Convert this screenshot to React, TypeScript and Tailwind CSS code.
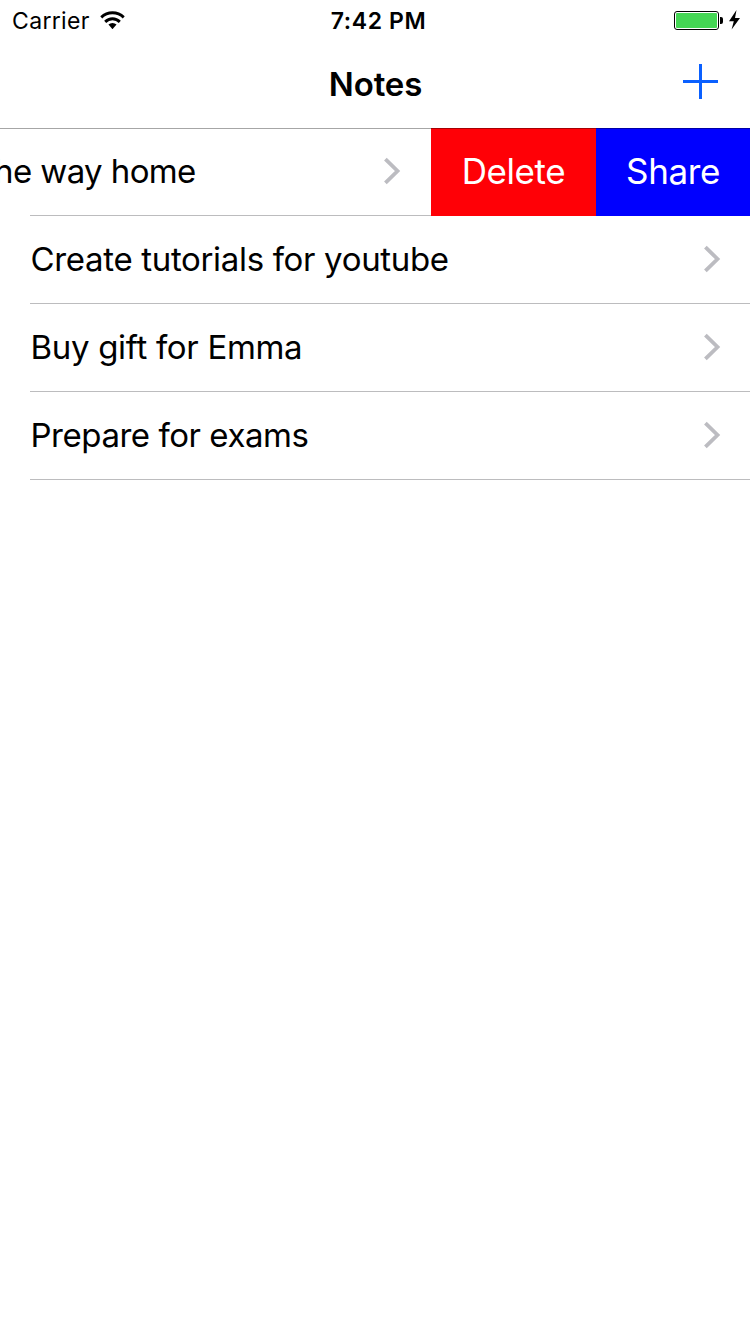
function Wifi() {
  return (
    <svg width="25" height="18" viewBox="0 0 26 18" preserveAspectRatio="none" fill="none" stroke="#000" strokeWidth="3">
      <path d="M1.3 6.4a17.2 17.2 0 0 1 23.4 0" />
      <path d="M5.4 10.9a10.9 10.9 0 0 1 15.2 0" />
      <path d="M13 18.2l-4.2-4.6a6.3 6.3 0 0 1 8.4 0z" fill="#000" stroke="none" />
    </svg>
  );
}

function Battery() {
  return (
    <svg width="67" height="20" viewBox="0 0 67 20">
      <rect x="0.5" y="1.5" width="44" height="18" rx="2.5" fill="#fff" stroke="#000" />
      <rect x="2" y="3" width="41" height="15" rx="1" fill="#44d654" />
      <path d="M46 7h1a2 2 0 0 1 2 2v3a2 2 0 0 1-2 2h-1z" />
      <path d="M62.5 0L55 11.2h4.8L57.6 19.5L66 8h-5z" />
    </svg>
  );
}

function Chevron() {
  return (
    <svg width="18" height="28" viewBox="0 0 18 28" fill="none" stroke="#bcbcc1" strokeWidth="3.8" className="mb-px shrink-0">
      <path d="M2.4 2.2L14.5 14L2.4 25.8" />
    </svg>
  );
}

const rows = [
  { title: "Create tutorials for youtube", spacing: "tracking-[-0.33px]" },
  { title: "Buy gift for Emma", spacing: "tracking-[-0.32px]" },
  { title: "Prepare for exams", spacing: "tracking-[-0.46px]" },
];

export default function App() {
  return (
    <main className="h-[1334px] w-[750px] overflow-hidden bg-white font-['Inter',sans-serif] text-black">
      <header className="h-32">
        <div className="grid h-10 grid-cols-[1fr_auto_1fr] items-center pl-3 pr-[9px]">
          <div className="flex items-center gap-[10px]">
            <span className="pt-[2px] text-[23px] leading-[38px] tracking-[0.34px]">Carrier</span>
            <Wifi />
          </div>
          <span className="pl-1 pt-[2px] text-[23px] font-semibold leading-[38px] tracking-[0.6px]">7:42 PM</span>
          <div className="flex justify-end">
            <Battery />
          </div>
        </div>
        <div className="grid h-[88px] grid-cols-[1fr_auto_1fr] items-center pr-8">
          <span />
          <h1 className="pl-[33px] text-[33px] font-semibold leading-[88px] tracking-[-0.1px]">Notes</h1>
          <button className="justify-self-end pb-[5px]" aria-label="Add">
            <svg width="35" height="35" viewBox="0 0 35 35" fill="#0a60ff">
              <path d="M16 0h3v16h16v3H19v16h-3V19H0v-3h16z" />
            </svg>
          </button>
        </div>
      </header>
      <section className="relative">
        <div className="flex h-[88px]">
          <div className="flex w-[431px] flex-col">
            <div className="flex h-[87px] items-center justify-between pr-[30px]">
              <span className="-ml-[6px] whitespace-nowrap text-[33px] tracking-[-0.6px]">he way home</span>
              <Chevron />
            </div>
            <div className="ml-[30px] h-px bg-[#bcbcbe]" />
          </div>
          <button className="w-[165px] bg-[#ff0006] pb-[2px] text-[35px] font-normal tracking-[-0.4px] text-white">Delete</button>
          <button className="w-[154px] bg-[#0000ff] pb-[2px] text-[35px] font-normal tracking-[-0.4px] text-white">Share</button>
        </div>
        <div className="absolute inset-x-0 top-0 h-px bg-black/35" />
        {rows.map((row) => (
          <div key={row.title} className="ml-[30px] flex h-[88px] items-center justify-between border-b border-[#bcbcbe] pl-[0.5px] pr-[29px]">
            <span className={`whitespace-nowrap text-[33px] ${row.spacing}`}>{row.title}</span>
            <Chevron />
          </div>
        ))}
      </section>
    </main>
  );
}
